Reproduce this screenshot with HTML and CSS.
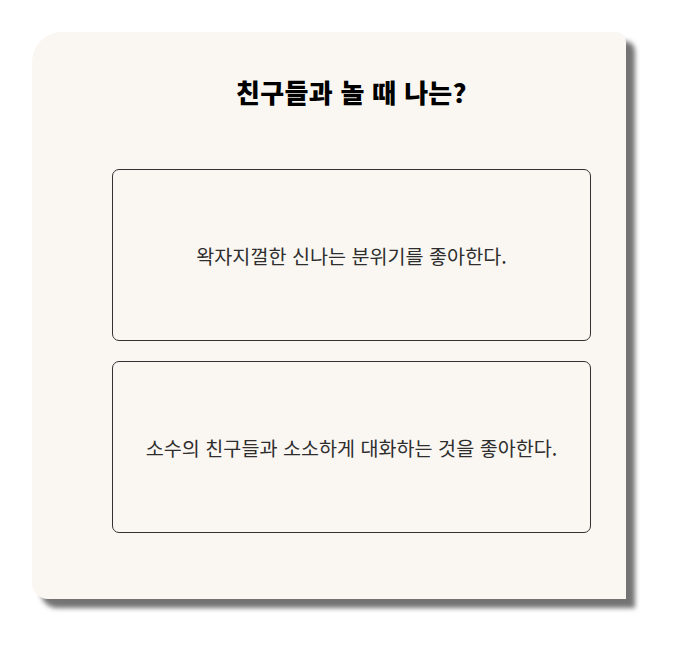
FILE: index.html
```html
<!DOCTYPE html>
<html lang="ko">
<head>
<meta charset="utf-8">
<link rel="stylesheet" href="styles.css">
</head>
<body>
<div class="card">
  <h1 class="title">친구들과 놀 때 나는?</h1>
  <div class="options">
    <div class="option">왁자지껄한 신나는 분위기를 좋아한다.</div>
    <div class="option">소수의 친구들과 소소하게 대화하는 것을 좋아한다.</div>
  </div>
</div>
</body>
</html>
```

FILE: styles.css
```css
html, body {
  margin: 0;
  padding: 0;
  background: #ffffff;
}
body {
  font-family: "Noto Sans CJK KR", "Noto Sans", sans-serif;
  min-height: 647px;
  padding: 32px 0 0 32px;
  box-sizing: border-box;
}
.card {
  box-sizing: border-box;
  width: 594px;
  height: 567px;
  background: #faf7f2;
  border-radius: 30px 10px 0 16px;
  box-shadow: 9px 9px 5px rgba(0, 0, 0, 0.55);
  padding: 0 35px 0 80px;
  display: flex;
  flex-direction: column;
}
.title {
  margin: 0;
  padding-top: 41px;
  height: 137px;
  box-sizing: border-box;
  text-align: center;
  font-size: 26px;
  font-weight: 900;
  line-height: 38px;
  color: #000;
  letter-spacing: 0.3px;
}
.options {
  display: flex;
  flex-direction: column;
  gap: 20px;
}
.option {
  height: 172px;
  box-sizing: border-box;
  border: 1px solid #333;
  border-radius: 7px;
  display: flex;
  align-items: center;
  justify-content: center;
  font-size: 19.6px;
  font-weight: 400;
  color: #2e2e2e;
}
```
